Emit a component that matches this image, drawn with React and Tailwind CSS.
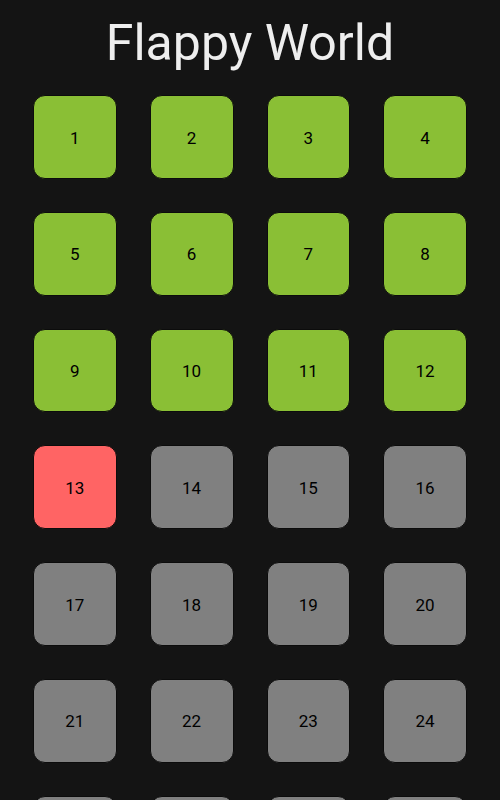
const unlocked = 12
const current = 13
const levels = Array.from({ length: 28 }, (_, i) => i + 1)

function Nivel({ n }) {
  let color = 'bg-[#8abf35]'
  if (n === current) color = 'bg-[#ff6464]'
  else if (n > unlocked) color = 'bg-[#808080]'
  return (
    <div
      className={`${color} aspect-square rounded-[12px] border border-[#0c0c0c] flex items-center justify-center pt-[3px] text-[17px] text-black`}
    >
      {n}
    </div>
  )
}

export default function App() {
  return (
    <div className="w-[500px] h-[800px] overflow-hidden bg-[#141414] font-['Roboto',sans-serif]">
      <h1 className="mt-[18px] text-center text-[50px] leading-none text-[#eeeeee]">Flappy World</h1>
      <div className="grid grid-cols-4 gap-[33px] px-[33px] pt-[27px]">
        {levels.map((n) => (
          <Nivel key={n} n={n} />
        ))}
      </div>
    </div>
  )
}
